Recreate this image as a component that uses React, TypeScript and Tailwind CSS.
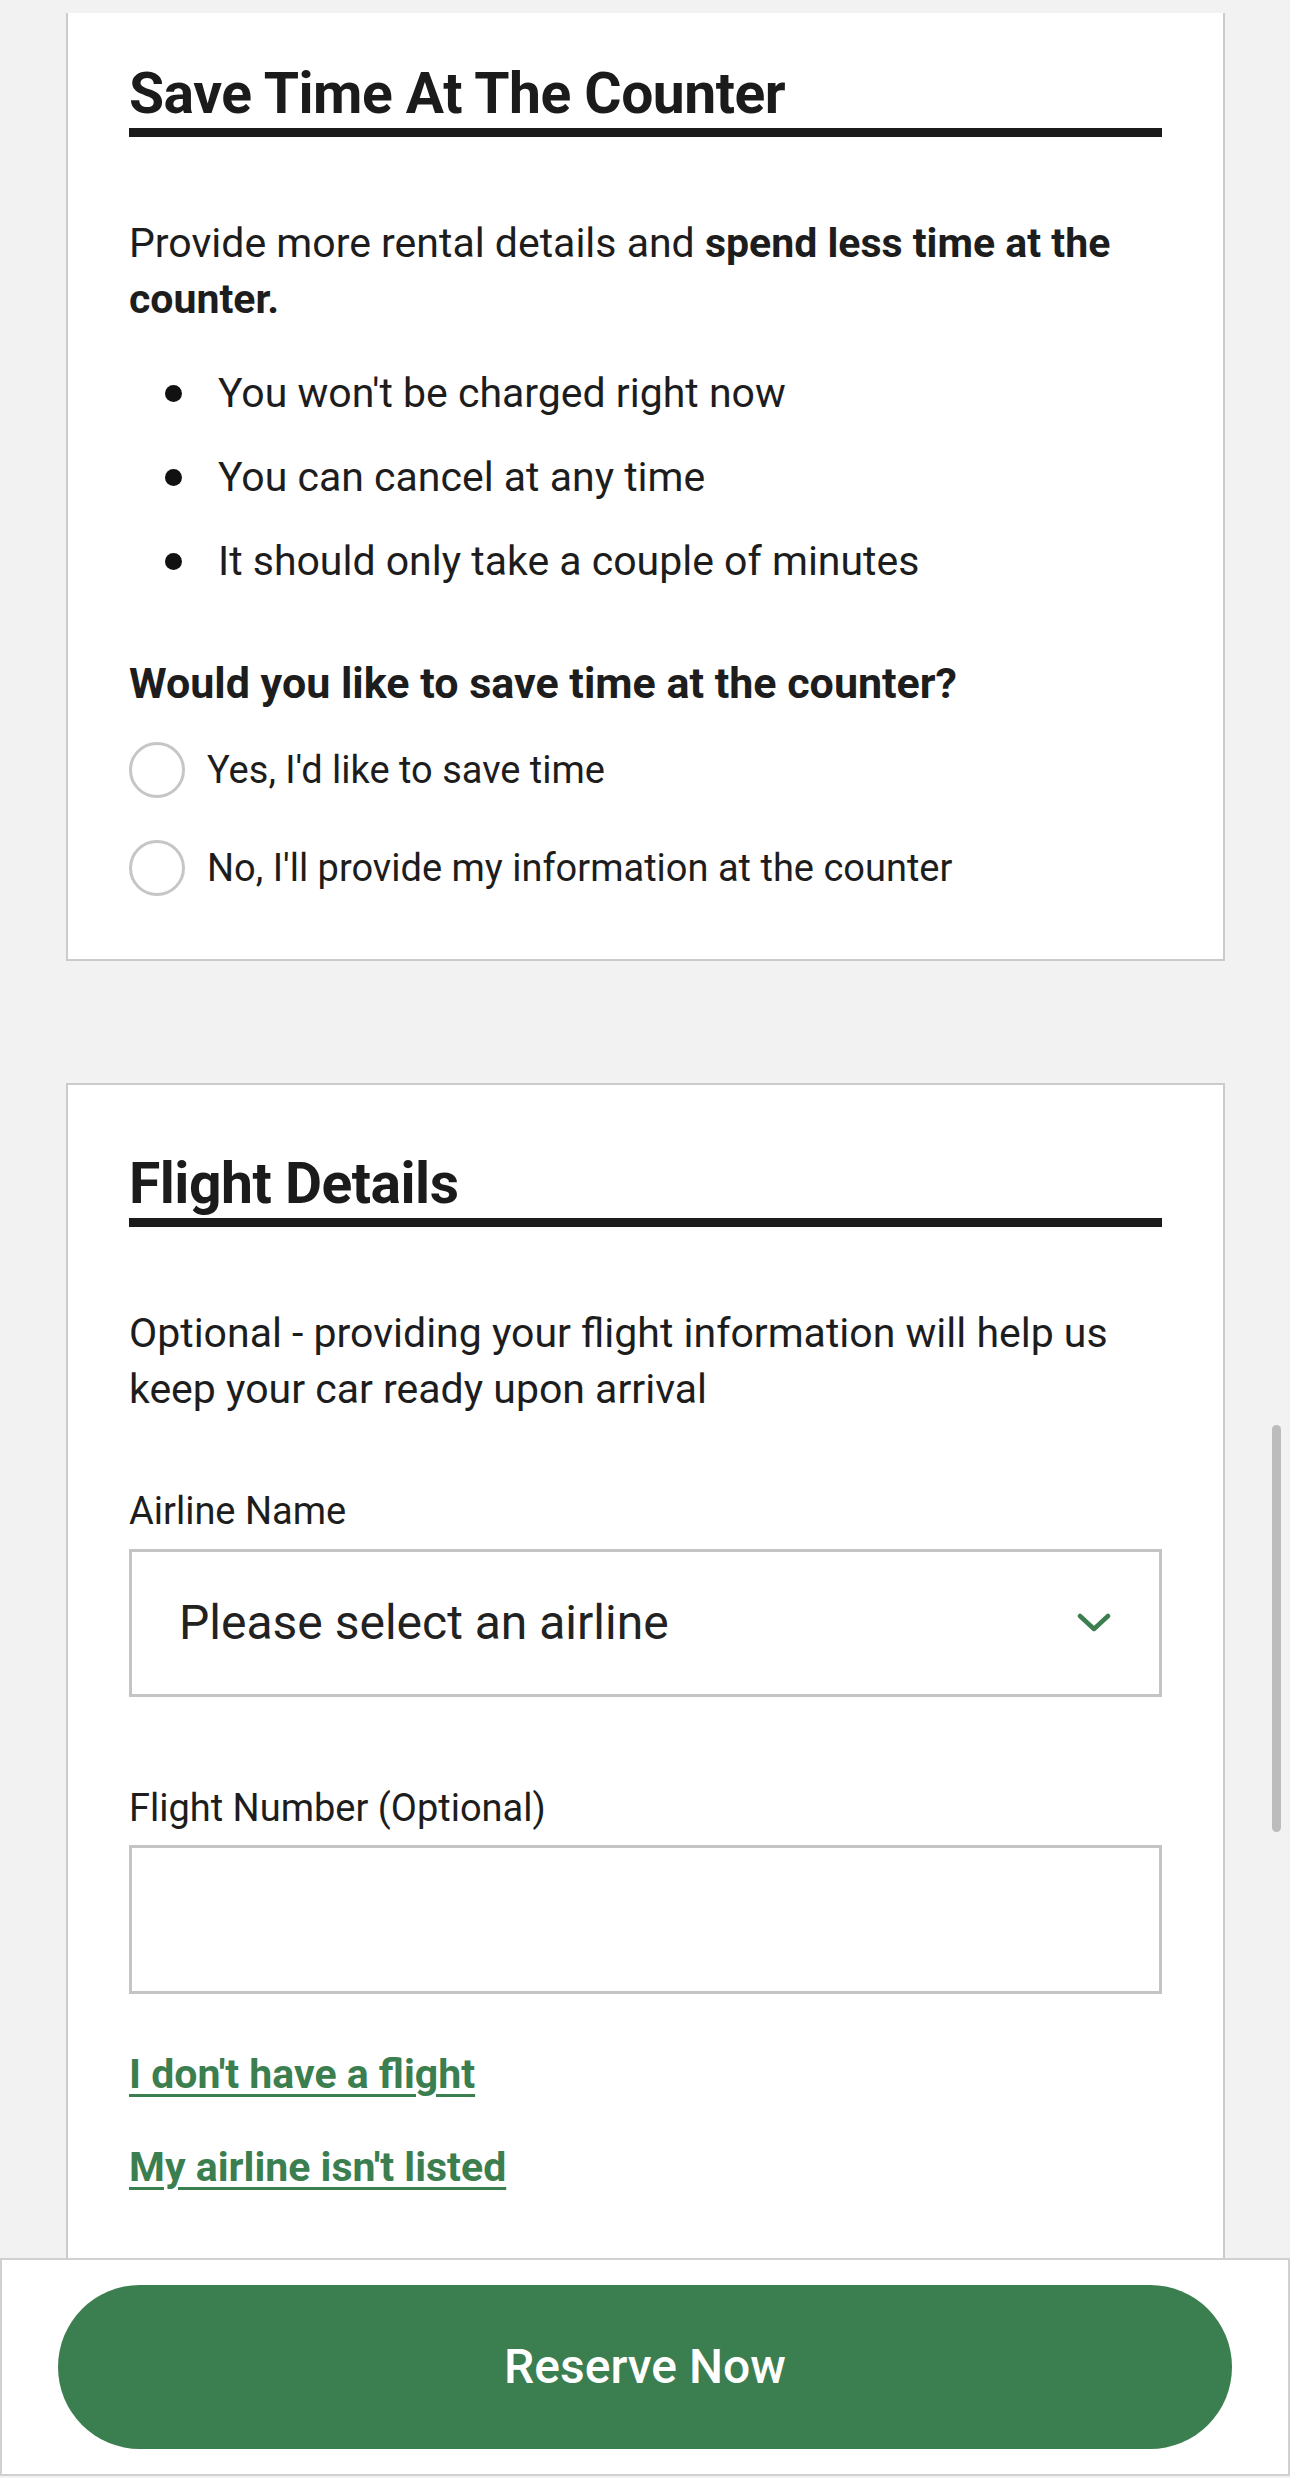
import React from 'react';

const GREEN = '#3b7e4f';

function Bullet({ children }: { children: React.ReactNode }) {
  return (
    <li className="flex items-center h-[56px]">
      <span className="ml-[36px] mr-[36px] h-[17px] w-[17px] shrink-0 rounded-full bg-[#111]" />
      <span>{children}</span>
    </li>
  );
}

function Radio({ label }: { label: string }) {
  return (
    <label className="flex items-center gap-[22px] h-[56px] text-[38px] leading-[56px]">
      <span className="h-[56px] w-[56px] shrink-0 rounded-full border-[3px] border-[#c6c6c6] bg-white" />
      <span>{label}</span>
    </label>
  );
}

function SectionTitle({ children }: { children: React.ReactNode }) {
  return (
    <h2 className="text-[57px] leading-[68px] font-bold tracking-[-0.5px] text-[#1b1b1b] border-b-[9px] border-[#1b1b1b]">
      {children}
    </h2>
  );
}

export default function App() {
  return (
    <div className="relative min-h-[2478px] bg-[#f2f2f2] pt-[13px] text-[#1d1d1d] font-['Roboto',sans-serif]">
      {/* save time card (top cut off by scroll) */}
      <section className="ml-[66px] w-[1159px] bg-white border-x-2 border-b-2 border-[#cbcbcb] px-[61px] pt-[47px] pb-[63px]">
        <SectionTitle>Save Time At The Counter</SectionTitle>
        <p className="mt-[78px] text-[41px] leading-[56px]">
          Provide more rental details and <strong className="font-bold">spend less time at the counter.</strong>
        </p>
        <ul className="mt-[38px] space-y-[28px] text-[41px] leading-[56px]">
          <Bullet>You won't be charged right now</Bullet>
          <Bullet>You can cancel at any time</Bullet>
          <Bullet>It should only take a couple of minutes</Bullet>
        </ul>
        <h3 className="mt-[66px] text-[43px] leading-[56px] font-bold">Would you like to save time at the counter?</h3>
        <div className="mt-[31px] flex flex-col gap-[42px]">
          <Radio label="Yes, I'd like to save time" />
          <Radio label="No, I'll provide my information at the counter" />
        </div>
      </section>

      {/* flight details */}
      <section className="mt-[122px] ml-[66px] w-[1159px] bg-white border-x-2 border-t-2 border-[#cbcbcb] px-[61px] pt-[65px] pb-[63px]">
        <SectionTitle>Flight Details</SectionTitle>
        <p className="mt-[78px] text-[41px] leading-[56px]">
          Optional - providing your flight information will help us keep your car ready upon arrival
        </p>

        <div className="mt-[70px] text-[38px] leading-[48px]">Airline Name</div>
        <div className="mt-[14px] h-[148px] border-[3px] border-[#c4c4c4] flex items-center justify-between pl-[47px] pr-[48px]">
          <span className="text-[48px] leading-none text-[#222]">Please select an airline</span>
          <svg width="34" height="20" viewBox="0 0 34 20" fill="none">
            <polyline points="3,3 17,16 31,3" stroke={GREEN} strokeWidth="4.5" strokeLinecap="round" strokeLinejoin="round" />
          </svg>
        </div>

        <div className="mt-[87px] text-[38px] leading-[48px]">Flight Number (Optional)</div>
        <div className="mt-[13px] h-[149px] border-[3px] border-[#c4c4c4] bg-white" />

        <div className="mt-[52px] flex flex-col items-start gap-[37px] text-[41px] leading-[56px] font-bold text-[#3b7e4f]">
          <a className="underline decoration-[3px] underline-offset-[6px]">I don't have a flight</a>
          <a className="underline decoration-[3px] underline-offset-[6px]">My airline isn't listed</a>
        </div>
      </section>

      {/* sticky footer */}
      <div className="bg-white border-2 border-[#d0d0d0] px-[56px] pt-[25px] pb-[25px]">
        <button className="flex h-[164px] w-full items-center justify-center rounded-full bg-[#3b7e4f] text-[48px] font-medium text-white">
          Reserve Now
        </button>
      </div>

      {/* scrollbar */}
      <div className="absolute left-[1272px] top-[1425px] h-[407px] w-[9px] rounded-full bg-[#bcbcbc]" />
    </div>
  );
}
